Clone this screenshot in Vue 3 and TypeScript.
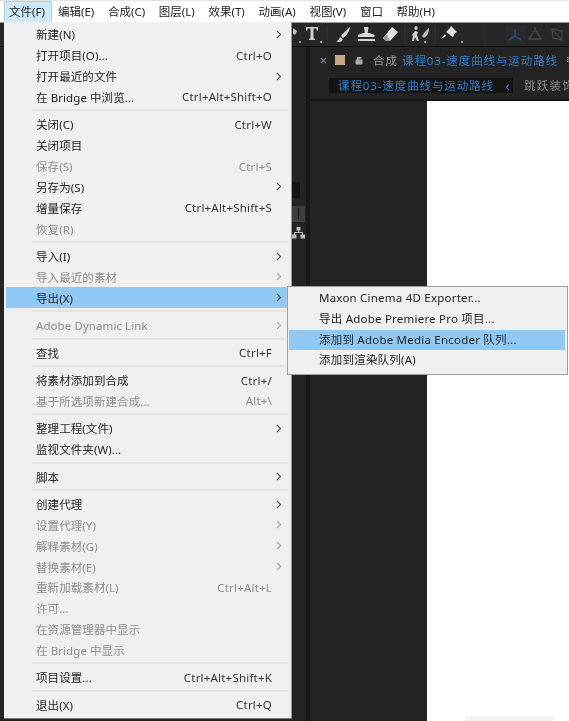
<template>
  <div class="app">
    <div class="menubar">
      <span v-for="(m, i) in menus" :key="m" class="menubar-item" :class="{ open: i === 0 }">{{ m }}</span>
    </div>

    <div class="workspace">
      <div class="toolbar">
        <svg class="tools" width="277" height="23" viewBox="0 0 277 23">
          <path d="M0 5l4 3-2 4-3-2z" fill="#c4c4c4" />
          <path d="M6 18h2v2H6z" fill="#9a9a9a" />
          <path d="M13 4h12v3.500h-1l-1-2h-2.500V15l1.500 1v1h-6v-1l1.500-1V5.500H15l-1 2h-1z" fill="#cfcfcf" />
          <path d="M27 18h2v2h-2z" fill="#9a9a9a" />
          <path d="M34 2v20" stroke="#333" />
          <path d="M57 4c-3 3-7 6-9 9l2 2c3-2 6-5 7-11z" fill="#d8d8d8" />
          <path d="M47 14c-1 2-1 3-4 4.500 4 1 7 0 6.500-2.500z" fill="#d8d8d8" />
          <path d="M71 4h4.500l-.8 6h1.800l5 2v2H65v-2l5-2h1.800zM65 16h17v2H65z" fill="#d8d8d8" />
          <path d="M99 4l6 5-8 9h-4l-3-3z" fill="#e2e2e2" />
          <path d="M90 15l3 3h4l-3-6z" fill="#9c9c9c" />
          <path d="M112 2v20" stroke="#333" />
          <circle cx="123" cy="5" r="1.800" fill="#d0d0d0" />
          <path d="M122 8l-3 4 1 1-1 5h2l1-4 2 4h2l-2-6 1-3z" fill="#d0d0d0" />
          <path d="M136 5c-3 2-5 5-7 8l2 2c3-2 5-5 5-10z" fill="#bdbdbd" />
          <path d="M131 18h2v2h-2z" fill="#9a9a9a" />
          <path d="M142 2v20" stroke="#333" />
          <path d="M158 3l6 6-2 1-2 4-2-1-2-2-3-2 3-3 1-1z" fill="#e0e0e0" />
          <path d="M152 11l-4 5 5-3z" fill="#e0e0e0" />
          <path d="M168 18h2v2h-2z" fill="#9a9a9a" />
          <path d="M192 2v20" stroke="#2c2c2c" />
          <rect x="212" y="2" width="20" height="20" fill="#2a2a2a" />
          <path d="M222 6v7l-6 4M222 13l6 4" stroke="#1f4d7c" stroke-width="1.600" fill="none" />
          <path d="M242 7l-6 9h12zM242 4v3" stroke="#4a4a4a" stroke-width="1.300" fill="none" />
          <path d="M259 6l10 2v9l-9-2zM259 6l10 11" stroke="#444" stroke-width="1.300" fill="none" />
        </svg>
      </div>
      <div class="panels">
        <div class="side"></div>
        <div class="gutter"></div>
        <div class="comp">
          <div class="comp-tab">
            <svg class="tab-icon" width="9" height="9" viewBox="0 0 9 9"><path d="M2 2l5 5M7 2l-5 5" stroke="#777" stroke-width="1.200" /></svg>
            <span class="swatch"></span>
            <svg class="tab-icon" width="10" height="10" viewBox="0 0 10 10"><path d="M2 5h6v4H2zM3.500 5V2.500h3.500V3.500" fill="#aaa" stroke="#aaa" /></svg>
            <span class="comp-label">合成</span>
            <span class="comp-name">课程03-速度曲线与运动路线</span>
            <span class="tab-menu"></span>
          </div>
          <div class="comp-flow">
            <div class="flow-box">
              <span class="comp-name">课程03-速度曲线与运动路线</span>
              <span class="chev">‹</span>
            </div>
            <span class="flow-next">跳跃装饰</span>
          </div>
          <div class="viewer">
            <div class="viewer-dark"></div>
            <div class="canvas"><span class="smudge"></span></div>
          </div>
        </div>
      </div>
    </div>

    <ul class="menu">
      <template v-for="(row, i) in rows" :key="i">
        <li v-if="row === null" class="sep"></li>
        <li v-else class="row" :class="{ off: row.off, hot: row.hot }">
          <span class="label">{{ row.label }}</span>
          <span class="key">{{ row.key }}</span>
          <svg v-if="row.sub" class="arrow" width="6" height="9" viewBox="0 0 6 9"><path d="M1 1l3.500 3.500L1 8" fill="none" stroke="currentColor" stroke-width="1.200" /></svg>
        </li>
      </template>
    </ul>

    <ul class="submenu">
      <li v-for="s in exportRows" :key="s" class="sub-row" :class="{ hot: s.includes('Encoder') }">{{ s }}</li>
    </ul>

    <div class="side-bits">
      <span class="field"></span>
      <span class="btn"></span>
      <svg width="13" height="12" viewBox="0 0 13 12"><path d="M4.500 0h4v3.500h-1.200v1.500h3.700v2.500h2v4h-4.500v-4h1.300V6H3.200v1.500h1.300v4H0v-4h2V5h4.300V3.500H4.500z" fill="#bdbdbd" /></svg>
    </div>
  </div>
</template>

<script setup lang="ts">
interface Row {
  label: string;
  key?: string;
  sub?: boolean;
  off?: boolean;
  hot?: boolean;
}

const menus = ['文件(F)', '编辑(E)', '合成(C)', '图层(L)', '效果(T)', '动画(A)', '视图(V)', '窗口', '帮助(H)'];

// null 表示分隔线
const rows: (Row | null)[] = [
  { label: '新建(N)', sub: true },
  { label: '打开项目(O)...', key: 'Ctrl+O' },
  { label: '打开最近的文件', sub: true },
  { label: '在 Bridge 中浏览...', key: 'Ctrl+Alt+Shift+O' },
  null,
  { label: '关闭(C)', key: 'Ctrl+W' },
  { label: '关闭项目' },
  { label: '保存(S)', key: 'Ctrl+S', off: true },
  { label: '另存为(S)', sub: true },
  { label: '增量保存', key: 'Ctrl+Alt+Shift+S' },
  { label: '恢复(R)', off: true },
  null,
  { label: '导入(I)', sub: true },
  { label: '导入最近的素材', sub: true, off: true },
  { label: '导出(X)', sub: true, hot: true },
  null,
  { label: 'Adobe Dynamic Link', sub: true, off: true },
  null,
  { label: '查找', key: 'Ctrl+F' },
  null,
  { label: '将素材添加到合成', key: 'Ctrl+/' },
  { label: '基于所选项新建合成...', key: 'Alt+\\', off: true },
  null,
  { label: '整理工程(文件)', sub: true },
  { label: '监视文件夹(W)...' },
  null,
  { label: '脚本', sub: true },
  null,
  { label: '创建代理', sub: true },
  { label: '设置代理(Y)', sub: true, off: true },
  { label: '解释素材(G)', sub: true, off: true },
  { label: '替换素材(E)', sub: true, off: true },
  { label: '重新加载素材(L)', key: 'Ctrl+Alt+L', off: true },
  { label: '许可...', off: true },
  { label: '在资源管理器中显示', off: true },
  { label: '在 Bridge 中显示', off: true },
  null,
  { label: '项目设置...', key: 'Ctrl+Alt+Shift+K' },
  null,
  { label: '退出(X)', key: 'Ctrl+Q' },
];

const exportRows = [
  'Maxon Cinema 4D Exporter...',
  '导出 Adobe Premiere Pro 项目...',
  '添加到 Adobe Media Encoder 队列...',
  '添加到渲染队列(A)',
];
</script>

<style>
body {
  background: #222;
}
</style>

<style scoped>
.app {
  position: relative;
  width: 569px;
  height: 721px;
  overflow: hidden;
  display: flex;
  flex-direction: column;
  background: #222;
  font-family: "Noto Sans", "Noto Sans CJK SC", sans-serif;
  font-size: 11.5px;
  color: #222;
  filter: blur(0.4px);
}

.menubar {
  flex: none;
  height: 22px;
  box-sizing: border-box;
  border-top: 1px solid #e4e4e4;
  background: #fff;
  display: flex;
  padding-left: 4px;
}

.menubar-item {
  padding: 0 5px;
  margin-right: 3.7px;
  line-height: 21px;
  white-space: nowrap;
}

.menubar-item.open {
  background: #d0e8f8;
  border: 1px solid #a8d2f0;
  border-bottom: none;
  box-sizing: border-box;
  line-height: 19px;
  padding: 0 0 0 4px;
  margin-right: 1px;
  width: 48px;
}

.workspace {
  flex: 1;
  display: flex;
  flex-direction: column;
  border-top: 1px solid #999;
  min-height: 0;
}

.toolbar {
  flex: none;
  height: 23px;
  background: #262626;
  display: flex;
  justify-content: flex-end;
  border-bottom: 1px solid #111;
}

.tools {
  margin-right: -1px;
  flex: none;
}

.panels {
  flex: 1;
  display: flex;
  min-height: 0;
}

.side {
  width: 306px;
  flex: none;
  background: #242424;
}

.gutter {
  width: 4px;
  flex: none;
  background: #181818;
}

.comp {
  flex: 1;
  min-width: 0;
  display: flex;
  flex-direction: column;
  background: #232323;
}

.comp-tab {
  height: 26px;
  flex: none;
  display: flex;
  align-items: center;
  padding-left: 9px;
  white-space: nowrap;
  overflow: hidden;
}

.tab-icon {
  flex: none;
}

.swatch {
  width: 10px;
  height: 10px;
  flex: none;
  background: #c4aa82;
  margin: 0 9px 0 7px;
}

.comp-label {
  color: #9a9a9a;
  flex: none;
  margin: 0 4px 0 9px;
  letter-spacing: 1px;
}

.comp-name {
  color: #2f7fc8;
  flex: none;
  letter-spacing: 0.9px;
}

.tab-menu {
  width: 6px;
  height: 6px;
  margin-left: 9px;
  flex: none;
  background: repeating-linear-gradient(#8a8a8a 0 1px, transparent 1px 2px);
}

.comp-flow {
  height: 28px;
  flex: none;
  display: flex;
  align-items: center;
  overflow: hidden;
  white-space: nowrap;
  padding-bottom: 2px;
  box-sizing: border-box;
  border-bottom: 2px solid #111;
}

.flow-box {
  margin-left: 19px;
  height: 15px;
  width: 184px;
  flex: none;
  display: flex;
  align-items: center;
  justify-content: space-between;
  box-sizing: border-box;
  padding: 0 3px 0 9px;
  background: #141414;
}

.chev {
  color: #2f7fc8;
  font-size: 15px;
  line-height: 15px;
}

.flow-next {
  color: #8a8a8a;
  margin-left: 11px;
  letter-spacing: 1.3px;
}

.viewer {
  flex: 1;
  display: flex;
  min-height: 0;
}

.viewer-dark {
  width: 117px;
  flex: none;
}

.canvas {
  flex: 1;
  background: #fff;
  position: relative;
}

.smudge {
  position: absolute;
  left: 38px;
  bottom: 0;
  width: 90px;
  height: 5px;
  background: #f4f4f4;
  border-radius: 4px 0 0 0;
}

.menu {
  position: absolute;
  left: 4px;
  top: 22px;
  width: 288px;
  height: 696px;
  box-sizing: border-box;
  margin: 0;
  padding: 2px 0 0;
  list-style: none;
  background: #f0f0f0;
  border-right: 1px solid #999;
  box-shadow: 0 1px 0 #777;
}

.row {
  height: 20.85px;
  display: flex;
  align-items: center;
  padding-left: 32px;
  position: relative;
  white-space: nowrap;
}

.row .label {
  letter-spacing: 0.08px;
}

.row .key {
  position: absolute;
  right: 19px;
  color: #333;
  letter-spacing: 0.2px;
}

.row .arrow {
  position: absolute;
  right: 9px;
  color: #555;
}

.row.off .label,
.row.off .key {
  color: #8d8d8d;
}

.row.off .arrow {
  color: #aaa;
}

.row.hot {
  margin-left: 2px;
  padding-left: 30px;
  margin-right: 3px;
  background: #90c8f6;
}

.row.hot .arrow {
  right: 6px;
}

.sep {
  height: 6.6px;
  position: relative;
}

.sep::after {
  content: "";
  position: absolute;
  left: 28px;
  right: 3px;
  top: 2px;
  height: 2px;
  background: #e3e3e3;
}

.submenu {
  position: absolute;
  left: 287px;
  top: 286px;
  width: 281px;
  height: 89px;
  box-sizing: border-box;
  margin: 0;
  padding: 1px 1px;
  list-style: none;
  background: #f0f0f0;
  border: 1px solid #a0a0a0;
  letter-spacing: 0.22px;
}

.sub-row {
  height: 20.8px;
  line-height: 20.8px;
  padding-left: 30px;
  white-space: nowrap;
}

.sub-row.hot {
  background: #90c8f6;
  margin-right: 1px;
}

.side-bits {
  position: absolute;
  left: 292px;
  top: 180px;
  width: 14px;
  height: 60px;
}

.field {
  position: absolute;
  left: 0;
  top: 2px;
  width: 8px;
  height: 16px;
  background: #141414;
  border-radius: 0 2px 2px 0;
}

.btn {
  position: absolute;
  left: 0;
  top: 26px;
  width: 13px;
  height: 16px;
  background: #3d3d3d;
}

.btn::after {
  content: "";
  position: absolute;
  left: 6px;
  top: 2px;
  width: 1px;
  height: 11px;
  background: #111;
}

.side-bits svg {
  position: absolute;
  left: 0;
  top: 47px;
}
</style>
